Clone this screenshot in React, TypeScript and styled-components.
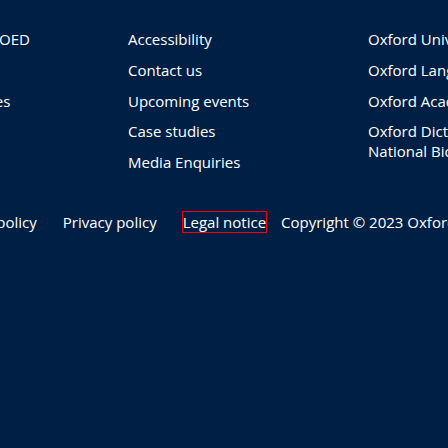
import React from "react";
import styled, { createGlobalStyle } from "styled-components";

const Global = createGlobalStyle`
  html, body {
    margin: 0;
    padding: 0;
    background: #001f44;
    overflow: hidden;
  }
  body {
    font-family: "Open Sans", "Liberation Sans", sans-serif;
    font-size: 15px;
    line-height: 19.5px;
    color: #ffffff;
  }
`;

const Footer = styled.footer`
  width: 448px;
  height: 448px;
  background: #001f44;
  overflow: hidden;
`;

const Inner = styled.div`
  margin-left: -125px;
  padding-top: 30px;
  width: 760px;
`;

const Columns = styled.div`
  display: grid;
  grid-template-columns: 213px 200px 170px;
  column-gap: 40px;
`;

const LinkList = styled.ul`
  list-style: none;
  margin: 0;
  padding: 0;
  display: flex;
  flex-direction: column;
  gap: 11.3px;
`;

const Item = styled.li`
  margin: 0;
`;

const Link = styled.a`
  color: #ffffff;
  text-decoration: none;
`;

const BottomRow = styled.ul`
  list-style: none;
  margin: 40.8px 0 0 0;
  padding: 0;
  display: flex;
  align-items: baseline;
  gap: 26px;
  white-space: nowrap;
`;

const BottomLink = styled.a<{ $focused?: boolean }>`
  color: #ffffff;
  text-decoration: none;
  outline: ${(p) => (p.$focused ? "1px solid #ff0000" : "none")};
`;

const Copyright = styled.li`
  margin-left: -11px;
`;

const col1 = ["Contribute to the OED", "Help", "Librarian resources", "News", "Blog"];
const col2 = ["Accessibility", "Contact us", "Upcoming events", "Case studies", "Media Enquiries"];
const col3 = [
  "Oxford University Press",
  "Oxford Languages",
  "Oxford Academic",
  "Oxford Dictionary of National Biography",
];

export default function App() {
  return (
    <>
      <Global />
      <Footer>
        <Inner>
          <Columns>
            {[col1, col2, col3].map((col, i) => (
              <LinkList key={i}>
                {col.map((t) => (
                  <Item key={t}>
                    <Link href="#">{t}</Link>
                  </Item>
                ))}
              </LinkList>
            ))}
          </Columns>
          <BottomRow>
            <Item>
              <BottomLink href="#">Terms</BottomLink>
            </Item>
            <Item>
              <BottomLink href="#">Cookie policy</BottomLink>
            </Item>
            <Item>
              <BottomLink href="#">Privacy policy</BottomLink>
            </Item>
            <Item>
              <BottomLink href="#" $focused>
                Legal notice
              </BottomLink>
            </Item>
            <Copyright>Copyright © 2023 Oxford University Press</Copyright>
          </BottomRow>
        </Inner>
      </Footer>
    </>
  );
}
